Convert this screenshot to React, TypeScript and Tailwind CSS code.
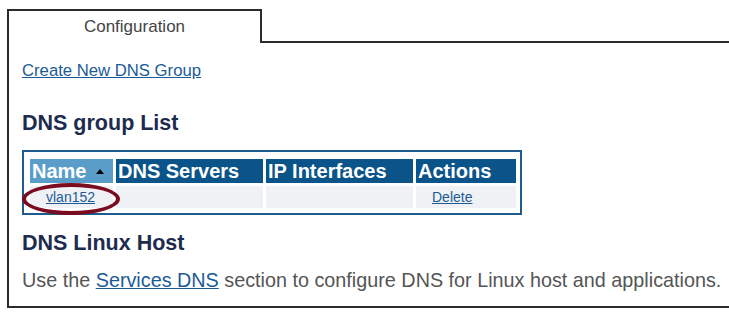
import React from 'react';

const headers = ['DNS Servers', 'IP Interfaces', 'Actions'];

export default function App() {
  return (
    <div
      className="relative w-[729px] h-[315px] bg-white overflow-hidden"
      style={{ fontFamily: '"Liberation Sans", Arial, sans-serif' }}
    >
      {/* tab strip */}
      <div className="flex items-end pt-[9px] pl-[7px]">
        <div className="w-[255px] h-[34px] border-t-2 border-l-2 border-r-2 border-[#2b2b2b] flex items-center justify-center text-[17px] text-[#444]">
          Configuration
        </div>
        <div className="flex-1 border-b-2 border-[#2b2b2b]" />
      </div>

      {/* panel */}
      <div className="ml-[7px] h-[265px] border-l-2 border-b-2 border-[#2b2b2b] pl-[13px] pt-[18px]">
        <a href="#" className="block w-fit text-[16.7px] leading-[20px] text-[#1a5b96] underline">
          Create New DNS Group
        </a>

        <h2 className="mt-[29px] text-[21.5px] leading-[26px] font-bold text-[#1d2b4f]">DNS group List</h2>

        <div className="mt-[14px] w-[500px] border-2 border-[#1f5b8c] pt-[7px] pb-[5px] pl-[6px] pr-[5px]">
          <div className="grid grid-cols-[83px_147px_147px_100px] gap-[3px]">
            <div className="h-[24px] bg-[#5b9dc9] flex items-center pl-[2px] text-white font-bold text-[20px]">
              Name
              <span className="ml-[10px] mt-[1px] w-0 h-0 border-l-[4px] border-r-[4px] border-b-[5px] border-l-transparent border-r-transparent border-b-black" />
            </div>
            {headers.map((h) => (
              <div key={h} className="h-[24px] bg-[#0b5489] flex items-center pl-[2px] text-white font-bold text-[20px] whitespace-nowrap">
                {h}
              </div>
            ))}
            <div className="h-[22px] bg-[#eff1f5] flex items-center pl-[16px]">
              <a href="#" className="text-[14px] text-[#1a5b96] underline">vlan152</a>
            </div>
            <div className="h-[22px] bg-[#eff1f5]" />
            <div className="h-[22px] bg-[#eff1f5]" />
            <div className="h-[22px] bg-[#eff1f5] flex items-center pl-[16px]">
              <a href="#" className="text-[14px] text-[#1a5b96] underline">Delete</a>
            </div>
          </div>
        </div>

        <h2 className="mt-[15px] text-[21.5px] leading-[26px] font-bold text-[#1d2b4f]">DNS Linux Host</h2>

        <p className="mt-[12px] text-[19.8px] leading-[24px] text-[#555] whitespace-nowrap">
          Use the{' '}
          <a href="#" className="text-[#1a5b96] underline">Services DNS</a>{' '}
          section to configure DNS for Linux host and applications.
        </p>
      </div>

      {/* highlight ring */}
      <div className="absolute left-[22px] top-[183px] w-[98px] h-[32px] rounded-[50%] border-[4px] border-[#7b0c1f]" />
    </div>
  );
}
